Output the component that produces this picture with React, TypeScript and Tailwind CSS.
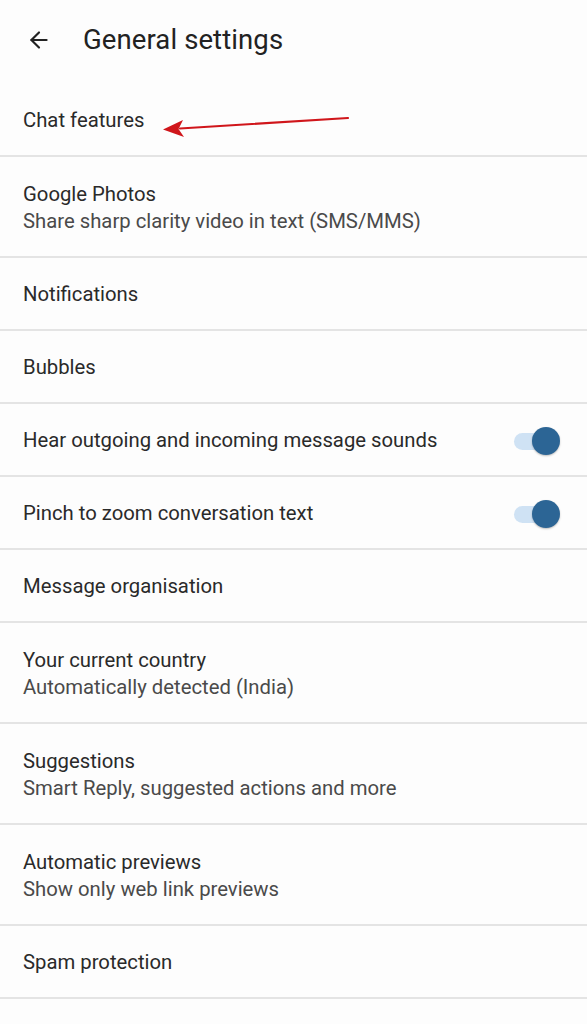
import { ArrowLeft } from "lucide-react";

type Item = { title: string; sub?: string; toggle?: boolean };

const items: Item[] = [
  { title: "Google Photos", sub: "Share sharp clarity video in text (SMS/MMS)" },
  { title: "Notifications" },
  { title: "Bubbles" },
  { title: "Hear outgoing and incoming message sounds", toggle: true },
  { title: "Pinch to zoom conversation text", toggle: true },
  { title: "Message organisation" },
  { title: "Your current country", sub: "Automatically detected (India)" },
  { title: "Suggestions", sub: "Smart Reply, suggested actions and more" },
  { title: "Automatic previews", sub: "Show only web link previews" },
  { title: "Spam protection" },
];

function Toggle() {
  return (
    <div className="relative h-[28px] w-[46px] shrink-0">
      <div className="absolute left-0 top-[6px] h-[17px] w-[36px] rounded-full bg-[#cfe2f4]" />
      <div className="absolute right-0 top-0 h-[28px] w-[28px] rounded-full bg-[#2c6595] shadow-[0_1px_2px_rgba(0,0,0,0.25)]" />
    </div>
  );
}

export default function App() {
  return (
    <main className="min-h-screen bg-[#fdfdfd] font-['Roboto','Liberation_Sans',sans-serif] text-[#2a2a2a]">
      <header className="flex h-[84px] items-center pb-[5px] pl-[26px]">
        <ArrowLeft className="h-[26px] w-[26px] text-[#222]" strokeWidth={2} />
        <h1 className="ml-[31px] text-[27.5px] tracking-[0.1px] text-[#222]">General settings</h1>
      </header>

      <div className="relative">
        <div className="flex h-[73px] items-center border-b-2 border-[#e4e4e4] pl-[23px] pt-[2px] text-[20.3px]">
          Chat features
        </div>
        <svg className="absolute left-[160px] top-[26px]" width="195" height="28" viewBox="0 0 195 28">
          <line x1="188" y1="8" x2="20" y2="18.5" stroke="#d0161b" strokeWidth="2.2" strokeLinecap="round" />
          <path d="M3 19.5 L23 10 L18.5 19 L24 27 Z" fill="#d0161b" />
        </svg>
      </div>

      {items.map((item) => (
        <div
          key={item.title}
          className={[
            "flex items-center justify-between border-b-2 border-[#e4e4e4] pl-[23px] pr-[27px] pt-[2px]",
            item.sub ? "h-[101px]" : "h-[73px]",
          ].join(" ")}
        >
          <div>
            <div className="text-[20.3px] leading-[27px]">{item.title}</div>
            {item.sub && <div className="text-[20.3px] leading-[27px] text-[#4a4a4a]">{item.sub}</div>}
          </div>
          {item.toggle && <Toggle />}
        </div>
      ))}
    </main>
  );
}
